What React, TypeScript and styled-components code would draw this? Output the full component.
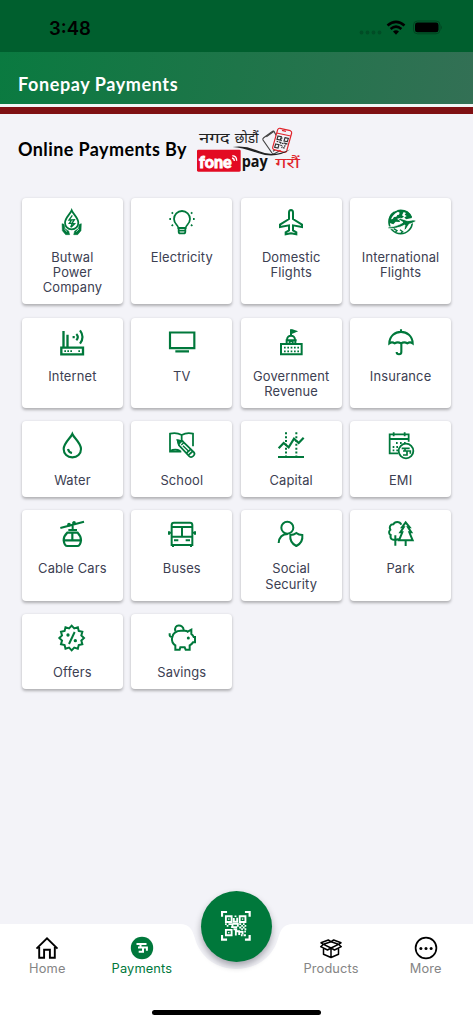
import { FC, ReactNode } from "react";
import styled, { createGlobalStyle } from "styled-components";

const GREEN = "#00783b";

const FlameHands = () => (
    <>
        <path d="M41 7C36 19 21 30 21 44c0 11 8 20 20 20s20-9 20-20C61 30 46 19 41 7Z" />
        <path d="M43 22 33 36h8l-7 10h9l-5 12M38 36l11-1-7 11 8 1-11 11" strokeWidth="4" />
        <path d="M12 47l6 2 3 13 11 7 3 11H23L13 68ZM70 47l-6 2-3 13-11 7-3 11h12l10-12Z" fill={GREEN} strokeWidth="1.5" />
        <path d="M19 63l8 8M63 63l-8 8" stroke="#fff" strokeWidth="2" />
    </>
);

const Bulb = () => (
    <>
        <path d="M31 60c0-9-13-12-13-27a24 24 0 0 1 48 0c0 15-13 18-13 27Z" />
        <path d="M32 61v10q0 5 5 5h10q5 0 5-5V61M32 68h20" />
        <path d="M4 33h5M75 33h5M11 13l4 4M73 13l-4 4M11 54l4-4M73 54l-4-4" />
    </>
);

const Plane = () => (
    <path d="M42 6c-4 0-6 4-6 8v19L9 50v7l27-5v15l-10 6v6l16-3 16 3v-6l-10-6V52l27 5v-7L48 33V14c0-4-2-8-6-8Z" strokeWidth="6" />
);

const Globe = () => (
    <>
        <circle cx="41" cy="42" r="35" strokeWidth="5" strokeDasharray="144 10 50 16" />
        <path d="M6 44C3 22 20 6 40 6c18 0 31 9 35 24l-18 4-6-8-10 6-3 10-12-1-7 8Z" fill={GREEN} stroke="none" />
        <path d="M33 11l5 3-2 6-5 1-3 5-7 1-4 6-5 1q4-14 21-23ZM50 12l7 3-4 5 6 4-6 4-8-6Z" fill="#fff" stroke="none" />
        <path d="M3 57c19 0 34-7 45-14L32 33l8-2 22 7 15-2c6 0 11 1 9 4-5 4-15 7-20 9l-9 15-6 3 3-16C37 60 20 63 3 62Z" fill={GREEN} stroke="#fff" strokeWidth="2.5" />
        <path d="M20 62l10 6-5 5M39 65l8 6-5 4" strokeWidth="4" />
    </>
);

const Router = () => (
    <>
        <path d="M10 59h65v20H10Z" strokeWidth="7" />
        <path d="M16.5 9v48M28.500 20v37" strokeWidth="7" />
        <path d="M19 69.5h5M28 69.5h5M37 69.5h5M61 69.5h5" />
        <path d="M47 24v7M55 18q9 9 0 19M66 7q15 20 0 40" strokeWidth="6.500" />
    </>
);

const Tv = () => <path d="M6 13.500h73v47H6ZM22 70h41" strokeWidth="6.500" />;

const Government = () => (
    <>
        <path d="M12 48h62v31H12ZM26 37h33M29 37v11M55 37v11M30 36c0-17 24-17 24 0M42 4v19M43 6l12 4-12 5M38 46v-7h9v7" strokeWidth="6" />
        <path d="M21 59h46M21 70h46" strokeDasharray="5 5" strokeWidth="5" />
    </>
);

const Umbrella = () => (
    <path d="M42 4v9M7 46C8 0 76 0 77 46q-8-6-16 0-9-6-19 0-10-6-19 0-8-6-16 0ZM43 47v25c0 9-14 9-14 0" strokeWidth="6.300" />
);

const Drop = () => (
    <path d="M43 9C38 21 17 36 17 54c0 15 11 25 26 25s26-10 26-25C69 36 48 21 43 9ZM30 54q2 10 12 12" strokeWidth="6.300" />
);

const School = () => (
    <>
        <path d="M75 46V8Q57 3 41 12 25 3 6 8v54h34M41 12v22M6 60q16-8 31 0" />
        <path d="M29 28l15 3 34 33q4 5-2 11-6 6-12 1L33 43ZM57 65l11-10M63 71l12-11" fill="#fff" />
        <path d="M29 28l12 2-9 9Z" fill={GREEN} />
        <path d="M40 42l7-7M45 44l17 17" strokeWidth="4" />
    </>
);

const Capital = () => (
    <>
        <path d="M3 78h78M5 52l15-16 15 13 16-26 14 13 15-16" strokeWidth="6.500" />
        <path d="M27 4v70M58 4v70" strokeDasharray="6 5.500" strokeWidth="6" />
    </>
);

const Emi = () => (
    <>
        <path d="M33 67H8V10h57v22M8 24h57M20 4v12M53 4v12" />
        <path d="M27 36h5M39 36h5M51 36h5M17 48h5M28 48h5M17 58h5M28 58h5" />
        <circle cx="57" cy="60" r="22" fill="#fff" strokeWidth="5.500" />
        <path d="M44 52h24M54 53v7M48 60h22v8M60 61v11H48" strokeWidth="5" />
    </>
);

const CableCar = () => (
    <>
        <path d="M7 24 78 5M44 14v16M31 30h26" strokeWidth="6" />
        <circle cx="33" cy="14" r="3" />
        <circle cx="48" cy="9" r="3" />
        <path d="M28 38h31q10 10 10 23-2 17-11 17H28Q19 78 17 61q0-13 11-23ZM17 61h52M43 38v23" strokeWidth="6.500" />
    </>
);

const Bus = () => (
    <path d="M18 8h48q7 0 7 7v60H11V15q0-7 7-7ZM11 21h62M11 50h62M42 21v29M18 61h13M53 61h13M15 75v6M69 75v6M3 34v10M81 34v10M3 38h8M73 38h8" strokeWidth="6" />
);

const Social = () => (
    <path d="M13 23a18 18 0 1 0 36 0a18 18 0 1 0-36 0M5 69q2-27 28-27M58 39q7 6 18 6c2 17-6 27-18 33-12-6-20-16-18-33q11 0 18-6Z" strokeWidth="6" />
);

const Park = () => (
    <path d="M43 14C38 3 23 4 19 13 9 13 6 22 10 29 3 35 7 43 11 45c-3 13 8 17 14 12q5 4 10-1M25 46v31M56 7 45 22h5L40 37h6L36 61h41L67 37h6L63 22h5ZM56 61v17" strokeWidth="6" />
);

const starPoints = Array.from({ length: 24 }, (_, i) => {
    const r = i % 2 ? 30 : 37;
    const a = (i * Math.PI) / 12;
    return `${41 + r * Math.sin(a)},${42 - r * Math.cos(a)}`;
}).join(" ");

const Offer = () => (
    <>
        <polygon points={starPoints} strokeWidth="6" />
        <path d="M50 24 33 60" strokeWidth="6" />
        <circle cx="30" cy="33" r="5" fill={GREEN} stroke="none" />
        <circle cx="52" cy="50" r="5" fill={GREEN} stroke="none" />
    </>
);

const Piggy = () => (
    <>
        <path d="M22 21C16 0 46-1 47 18" strokeWidth="6" />
        <path d="M5 28v6q1 5 8 5C16 25 27 20 39 20h11q7 0 9 3l11-6v13q5 4 7 9h4v16h-6q-4 6-10 9v13H53l-3-7H37l-2 7H22V64Q10 57 12 40" strokeWidth="6" />
        <circle cx="61" cy="42" r="4.500" fill={GREEN} stroke="none" />
    </>
);

const services: { name: string; icon: ReactNode }[] = [
    { name: "Butwal Power Company", icon: <FlameHands /> },
    { name: "Electricity", icon: <Bulb /> },
    { name: "Domestic Flights", icon: <Plane /> },
    { name: "International Flights", icon: <Globe /> },
    { name: "Internet", icon: <Router /> },
    { name: "TV", icon: <Tv /> },
    { name: "Government Revenue", icon: <Government /> },
    { name: "Insurance", icon: <Umbrella /> },
    { name: "Water", icon: <Drop /> },
    { name: "School", icon: <School /> },
    { name: "Capital", icon: <Capital /> },
    { name: "EMI", icon: <Emi /> },
    { name: "Cable Cars", icon: <CableCar /> },
    { name: "Buses", icon: <Bus /> },
    { name: "Social Security", icon: <Social /> },
    { name: "Park", icon: <Park /> },
    { name: "Offers", icon: <Offer /> },
    { name: "Savings", icon: <Piggy /> },
];

const StatusIcons = () => (
    <svg width="84" height="16" viewBox="0 0 84 16">
        <g fill="#004d26">
            <circle cx="3.500" cy="12.500" r="1.900" />
            <circle cx="9.500" cy="12.500" r="1.900" />
            <circle cx="15.500" cy="12.500" r="1.900" />
            <circle cx="21.500" cy="12.500" r="1.900" />
        </g>
        <g fill="none" stroke="#000" strokeWidth="2.600">
            <path d="M29.500 5.600q8.500-7.400 17 0" />
            <path d="M32.600 8.900q5.400-4.600 10.800 0" />
        </g>
        <path d="M35 11.600q3-2.600 6 0l-3 3.200Z" />
        <rect x="55.500" y="1" width="26.500" height="12.800" rx="4" fill="none" stroke="#004420" />
        <rect x="57" y="2.500" width="23.500" height="9.800" rx="2.400" />
        <path d="M83 5.500q1.600 2 0 4Z" fill="#004420" />
    </svg>
);

const Logo = () => (
    <svg width="106" height="48" viewBox="18 18 318 144">
        <g fontFamily="'Noto Sans', sans-serif">
            <text x="27" y="66" textLength="92" lengthAdjust="spacingAndGlyphs" fontSize="44" fill="#222">नगद</text>
            <text x="134" y="66" textLength="72" lengthAdjust="spacingAndGlyphs" fontSize="44" fill="#222">छोडौं</text>
            <text x="256" y="142" textLength="74" lengthAdjust="spacingAndGlyphs" fontSize="44" fill="#e0242b">गरौं</text>
        </g>
        <g fill="#f4f3f8" strokeWidth="3.500">
            <path d="M219 57q-2-4 2-7l25-18q4-3 7 1l27 50-27 15q-4 2-7-2Z" stroke="#444" />
            <path d="M229 47l24-17M249 91l17-11" stroke="#444" />
            <path d="M263 26q2-5 7-4l31 7q5 2 4 7l-15 54q-2 5-7 4l-31-8q-5-2-4-7Z" stroke="#e0242b" />
            <path d="M260 36l42 9M276 28l12 3M266 88l7 2" stroke="#e0242b" />
        </g>
        <g fill="none" stroke="#333" strokeWidth="3.500">
            <path d="M264 45l10 2-3 10-10-2ZM285 50l10 2-3 10-10-2ZM257 69l10 2-3 10-10-2Z" />
            <path d="M276 49l-4 17 8 2M260 61l14 4M288 66l-6 15-8-2M271 72l8 4M281 66l12 3" strokeDasharray="5 2" />
        </g>
        <path d="M128 78q38-6 80 13t94-6q-45 30-96 12t-78-19Z" fill="#222" />
        <rect x="21" y="86" width="131" height="66" rx="4" fill="#e30b23" />
        <text x="27" y="142" textLength="98" lengthAdjust="spacingAndGlyphs" fontSize="50" fontWeight="900" fontFamily="Lato, sans-serif" fill="#fff" stroke="#fff" strokeWidth="2.500">fone</text>
        <g fill="none" stroke="#fff" strokeWidth="4">
            <path d="M126 111q7 1 7 9M127 104q13 1 13 15" />
        </g>
        <text x="155" y="138" textLength="78" lengthAdjust="spacingAndGlyphs" fontSize="46" fontWeight="700" fontFamily="'Open Sans', sans-serif" fill="#111">pay</text>
    </svg>
);

const QrIcon = () => (
    <svg width="30" height="30" viewBox="150 93 89 89" fill="none" stroke="#fff">
        <path d="M153 110V96h15M221 96h14v14M235 164v14h-14M168 178h-15v-14" strokeWidth="6.500" />
        <path d="M164.500 108.500h17v17h-17ZM205.500 108.500h17v17h-17ZM164.500 149h17v16h-17Z" strokeWidth="5.500" />
        <path d="M171 117h4M212 117h4M171 157h4" strokeWidth="4" />
        <path d="M193 106v5M188 114v11h10v-12M185 131h15v9M162 132h5M167 137h5M172 132h12v9M180 141h18M204 132h6M210 137h5M215 132h5M220 137h5M204 142h6M215 142h5M220 147h5M210 147h5M187 147h11M194 166v-13h10v11M204 155h10v7M219 154h5M209 165h5M217 165h7" strokeWidth="5.500" />
    </svg>
);

const HomeIcon = () => (
    <svg width="24" height="24" viewBox="0 0 24 24" fill="none" stroke="#000" strokeWidth="1.900">
        <path d="M1.500 12.700 12 2.300l10.500 10.400M4.200 11v10.700h4.900v-8h5.800v8h4.900V11" />
    </svg>
);

const PaymentsIcon = () => (
    <svg width="24" height="24" viewBox="0 0 24 24" fill="none" stroke="#fff">
        <circle cx="12" cy="12" r="11.200" fill={GREEN} stroke="none" />
        <path d="M6.500 7.900h10M10.500 8v3.200M8 11.400h8.900v3.300M13 11.500v4.300H8.700" strokeWidth="2" />
    </svg>
);

const ProductsIcon = () => (
    <svg width="24" height="24" viewBox="0 0 24 24" fill="none" stroke="#000" strokeWidth="1.500" strokeLinejoin="round">
        <path d="M4.500 11.500v6.700l7.500 3.300 7.500-3.300v-6.700M12 12v9M12 12 4.500 8.300 12 5.700l7.500 2.600ZM4.500 8.300 1.700 10.700 8.500 14l3.500-2 3.500 2 6.800-3.300-2.800-2.400M4.500 8.300 2 6.800 9.300 4 12 5.700 14.700 4 22 6.800l-2.500 1.500" />
    </svg>
);

const MoreIcon = () => (
    <svg width="24" height="24" viewBox="0 0 24 24" fill="none" stroke="#000" strokeWidth="1.700">
        <circle cx="12" cy="12" r="10.400" />
        <g fill="#000" stroke="none">
            <circle cx="6.900" cy="12.400" r="1.500" />
            <circle cx="12" cy="12.400" r="1.500" />
            <circle cx="17.100" cy="12.400" r="1.500" />
        </g>
    </svg>
);

const App: FC = () => {
    return (
        <Container>
            <GlobalStyle />
            <StatusBar>
                <Time>3:48</Time>
                <StatusIcons />
            </StatusBar>
            <Header>
                <Title>Fonepay Payments</Title>
            </Header>
            <Stripe />
            <Main>
                <SectionHead>
                    <SectionTitle>Online Payments By</SectionTitle>
                    <Logo />
                </SectionHead>
                <ServiceGrid>
                    {services.map((service) => (
                        <Card key={service.name}>
                            <CardIcon viewBox="0 0 84 84">{service.icon}</CardIcon>
                            <CardLabel>{service.name}</CardLabel>
                        </Card>
                    ))}
                </ServiceGrid>
            </Main>
            <NavBar>
                <NavShape />
                <NavItem>
                    <HomeIcon />
                    <NavLabel>Home</NavLabel>
                </NavItem>
                <NavItem>
                    <PaymentsIcon />
                    <NavLabel $active>Payments</NavLabel>
                </NavItem>
                <NavItem>
                    <ScanButton>
                        <QrIcon />
                    </ScanButton>
                </NavItem>
                <NavItem>
                    <ProductsIcon />
                    <NavLabel>Products</NavLabel>
                </NavItem>
                <NavItem>
                    <MoreIcon />
                    <NavLabel>More</NavLabel>
                </NavItem>
                <HomeIndicator />
            </NavBar>
        </Container>
    );
};

export default App;

const GlobalStyle = createGlobalStyle`
    * {
        box-sizing: border-box;
    }
    body {
        margin: 0;
        background-color: #f3f3f8;
    }
`;

const Container = styled.div`
    display: flex;
    flex-direction: column;
    width: 473px;
    height: 1024px;
    overflow: hidden;
    background-color: #f3f3f8;
    font-family: Inter, "Noto Sans", sans-serif;
`;

const StatusBar = styled.div`
    display: flex;
    align-items: center;
    justify-content: space-between;
    height: 52px;
    padding: 3px 31px 0 49px;
    background-color: #005f2e;
`;

const Time = styled.div`
    font-size: 18.5px;
    font-weight: 600;
    color: #000;
`;

const Header = styled.div`
    display: flex;
    align-items: center;
    height: 52px;
    padding: 11px 18px 0;
    background: linear-gradient(100deg, #0a7a40 0%, #1e7549 50%, #337055 100%);
`;

const Title = styled.h1`
    margin: 0;
    font-family: Lato, sans-serif;
    font-size: 18px;
    font-weight: 700;
    letter-spacing: 0.6px;
    color: #fff;
`;

const Stripe = styled.div`
    height: 10px;
    border-top: 3px solid #f1f6f5;
    background-color: #7f1013;
`;

const Main = styled.main`
    flex: 1;
    padding: 13px 22px 0;
`;

const SectionHead = styled.div`
    display: flex;
    align-items: center;
    gap: 9px;
    height: 47px;
    margin-left: -4px;
`;

const SectionTitle = styled.h2`
    width: 169px;
    margin: 0;
    padding-bottom: 3px;
    font-family: Lato, sans-serif;
    font-size: 18px;
    font-weight: 700;
    letter-spacing: 0.4px;
    white-space: nowrap;
    color: #000;
`;

const ServiceGrid = styled.div`
    display: grid;
    grid-template-columns: repeat(4, 1fr);
    gap: 13.2px 8.6px;
    margin-top: 24.3px;
`;

const Card = styled.div`
    display: flex;
    flex-direction: column;
    align-items: center;
    padding: 10px 8px 8.6px;
    border-radius: 4px;
    background-color: #fff;
    box-shadow: 0 1.5px 3px rgba(0, 0, 0, 0.28);
`;

const CardIcon = styled.svg`
    width: 28px;
    height: 28px;
    overflow: visible;
    fill: none;
    stroke: ${GREEN};
    stroke-width: 5.3;
`;

const CardLabel = styled.div`
    margin-top: 13.3px;
    font-size: 12.9px;
    line-height: 15.4px;
    letter-spacing: 0.15px;
    text-align: center;
    color: #3c4052;
`;

const NavBar = styled.nav`
    position: relative;
    display: flex;
    height: 100px;
`;

// white panel with a rounded dip under the scan button
const NavShape = styled.div`
    position: absolute;
    inset: 0;
    background-color: #fff;
    clip-path: path("M0 0H180C189 0 192 5 194.500 13C200 34 217 45 236.500 45C256 45 273 34 278.500 13C281 5 284 0 293 0H473V100H0Z");
`;

const NavItem = styled.div`
    position: relative;
    display: flex;
    flex: 1;
    flex-direction: column;
    align-items: center;
    padding-top: 11.5px;
`;

const NavLabel = styled.span<{ $active?: boolean }>`
    margin-top: 1px;
    font-size: 12.8px;
    line-height: 16px;
    letter-spacing: 0.15px;
    color: ${(props) => (props.$active ? GREEN : "#858585")};
`;

const ScanButton = styled.button`
    position: absolute;
    top: -33.5px;
    display: flex;
    align-items: center;
    justify-content: center;
    width: 71px;
    height: 71px;
    padding: 0;
    border: none;
    border-radius: 50%;
    background-color: ${GREEN};
    box-shadow: 0 4px 7px rgba(0, 0, 20, 0.32);
`;

const HomeIndicator = styled.div`
    position: absolute;
    bottom: 9px;
    left: 152px;
    width: 169px;
    height: 5.5px;
    border-radius: 3px;
    background-color: #000;
`;
